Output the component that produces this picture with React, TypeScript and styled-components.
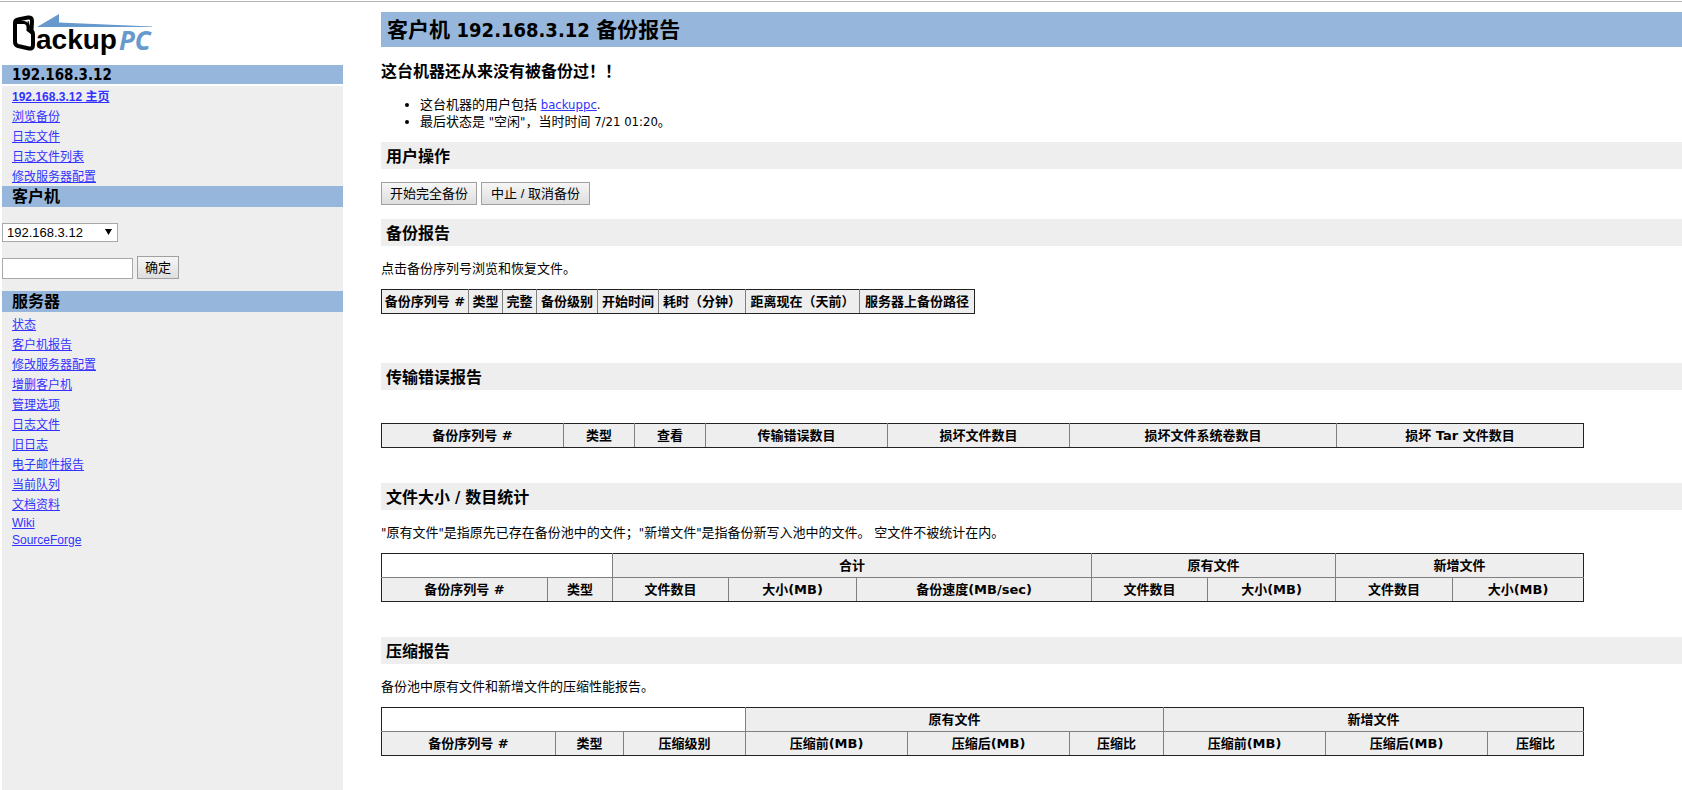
import React from "react";
import styled, { createGlobalStyle } from "styled-components";

const GlobalStyle = createGlobalStyle`
  *, *::before, *::after { box-sizing: border-box; }
  body {
    margin: 0;
    background: #fff;
    color: #000;
    font-family: "DejaVu Sans Condensed", "Noto Sans CJK SC", sans-serif;
    font-size: 13px;
    line-height: 17px;
  }
  a { color: #33f; }
`;

const Page = styled.div`
  display: flex;
  align-items: stretch;
  min-height: calc(100vh - 1px);
  margin-top: 1px;
  border-top: 1px solid #b3b3b3;
  padding-left: 2px;
`;

const Sidebar = styled.aside`
  flex: 0 0 341px;
  display: flex;
  flex-direction: column;
  font-family: "Liberation Sans", "Noto Sans CJK SC", sans-serif;
  font-size: 12px;
`;

const LogoArea = styled.div`
  height: 63px;
  padding: 11px 0 0 8px;
`;

const SideTitle = styled.h2<{ $host?: boolean }>`
  margin: 0 0 ${(p) => (p.$host ? "2px" : "0")};
  padding: 1px 0 0 10px;
  background: #96b7db;
  font-family: "DejaVu Sans Condensed", "Noto Sans CJK SC", sans-serif;
  font-size: ${(p) => (p.$host ? "15px" : "16px")};
  line-height: ${(p) => (p.$host ? "18px" : "20px")};
  font-weight: 700;
`;

const SidePanel = styled.div<{ $grow?: boolean }>`
  background: #eee;
  flex: ${(p) => (p.$grow ? "1 0 auto" : "0 0 auto")};
  padding-top: ${(p) => (p.$grow ? "3px" : "0")};
`;

const HostPanel = styled(SidePanel)`
  padding-top: 1px;
  margin-bottom: -1px;
`;

const LinkList = styled.ul`
  list-style: none;
  margin: 0;
  padding: 0 0 0 10px;
`;

const LinkRow = styled.li<{ $latin?: boolean; $strong?: boolean }>`
  line-height: ${(p) => (p.$latin ? "17px" : "20px")};
  font-weight: ${(p) => (p.$strong ? 700 : 400)};
`;

const HostForm = styled.form`
  display: flex;
  flex-direction: column;
  align-items: flex-start;
  gap: 14px;
  padding: 16px 0 12px;
`;

const FormRow = styled.div`
  display: flex;
  align-items: flex-end;
  gap: 4px;
`;

const SelectWrap = styled.div`
  position: relative;
  width: 116px;
  height: 19px;

  svg {
    position: absolute;
    right: 6px;
    top: 6px;
    pointer-events: none;
  }
`;

const HostSelect = styled.select`
  appearance: none;
  display: block;
  width: 100%;
  height: 100%;
  border: 1px solid #a9a9a9;
  border-radius: 0;
  background: #fff;
  color: #000;
  padding: 0 4px;
  font-family: "Liberation Sans", sans-serif;
  font-size: 13px;
`;

const HostInput = styled.input`
  width: 131px;
  height: 21px;
  border: 1px solid #a9a9a9;
  padding: 1px 2px;
  background: #fff;
  font-size: 13px;
`;

const Button = styled.button`
  height: 23px;
  border: 1px solid #a0a0a0;
  border-radius: 0;
  background: linear-gradient(#f6f6f6, #dedede);
  color: #000;
  padding: 0 7px;
  font-family: "Liberation Sans", "Noto Sans CJK SC", sans-serif;
  font-size: 13px;
  line-height: 21px;
`;

const ActionButton = styled(Button)<{ $wide?: boolean }>`
  padding: 0;
  width: ${(p) => (p.$wide ? "109px" : "96px")};
`;

const Content = styled.main`
  flex: 1 1 0;
  min-width: 0;
  margin-left: 38px;
  padding: 10px 0 33px;
`;

const PageTitle = styled.h1`
  margin: 0;
  padding: 2px 6px 0;
  background: #96b7db;
  font-size: 21px;
  line-height: 33px;
  font-weight: 700;
`;

const HostName = styled.span`
  font-size: 20px;
  line-height: 20px;
`;

const Notice = styled.h3`
  margin: 13px 0 12px;
  font-size: 16px;
  line-height: 24px;
`;

const Facts = styled.ul`
  margin: 0 0 12px;
  padding-left: 39px;
`;

const SectionTitle = styled.h2`
  margin: 0;
  padding: 2px 5px 0;
  background: #eee;
  font-size: 16px;
  line-height: 25px;
`;

const Actions = styled.div`
  display: flex;
  gap: 4px;
  padding: 13px 0 14px;
`;

const Lead = styled.p`
  margin: 0;
  padding: 14px 0 12px;
`;

const Section = styled.section<{ $space?: "large" | "medium" }>`
  margin-bottom: ${(p) => (p.$space === "large" ? "49px" : p.$space === "medium" ? "35px" : "0")};
`;

const Table = styled.table<{ $full?: boolean; $apart?: boolean }>`
  table-layout: fixed;
  border-collapse: collapse;
  width: ${(p) => (p.$full ? "calc(100% - 99px)" : "593px")};
  margin-top: ${(p) => (p.$apart ? "33px" : "0")};
  border: 1px solid #222;
`;

const Head = styled.th<{ $blank?: boolean }>`
  height: 24px;
  padding: 0;
  border: 1px solid #808080;
  background: ${(p) => (p.$blank ? "#fff" : "#eee")};
  font-family: "DejaVu Sans", "Noto Sans CJK SC", sans-serif;
  font-size: 13px;
  line-height: 17px;
  font-weight: 700;
  white-space: nowrap;

  tr:first-child > & { border-top-color: #222; }
  tr:last-child > & { border-bottom-color: #222; }
  &:first-child { border-left-color: #222; }
  &:last-child { border-right-color: #222; }
`;

type Group = { label: string; span: number };

function ReportTable(props: {
  columns: [string, number][];
  groups?: Group[];
  full?: boolean;
  apart?: boolean;
}) {
  return (
    <Table $full={props.full} $apart={props.apart}>
      <colgroup>
        {props.columns.map(([, w], i) => (
          <col key={i} width={w} />
        ))}
      </colgroup>
      <thead>
        {props.groups && (
          <tr>
            {props.groups.map((g, i) => (
              <Head key={i} colSpan={g.span} $blank={!g.label}>
                {g.label}
              </Head>
            ))}
          </tr>
        )}
        <tr>
          {props.columns.map(([label], i) => (
            <Head key={i} scope="col">
              {label}
            </Head>
          ))}
        </tr>
      </thead>
    </Table>
  );
}

function Logo() {
  return (
    <svg width="146" height="44" viewBox="0 0 146 44" role="img" aria-label="BackupPC">
      <path d="M27 14 L49 1 V9.5 L142 13.500 V14 Z" fill="#69c" />
      <path
        d="M5 10 Q5 7 8 6.500 L18 4.500 Q22 4 22 8 L21.500 17 Q23 19 23 22 L23 32 Q23 36 19 35.500 L8 33 Q5 32 5 29 Z"
        fill="#fff"
        stroke="#000"
        strokeWidth="4"
        strokeLinejoin="round"
      />
      <path d="M6 9.500 L14 9.500 Q18 10 18 14 V17 L22 20" fill="none" stroke="#000" strokeWidth="3" />
      <path d="M18 8 L20 16" fill="none" stroke="#000" strokeWidth="1" />
      <text x="26" y="36" fontFamily="Liberation Sans" fontWeight="700" fontSize="28" fill="#000">
        ackup
      </text>
      <text x="109" y="37" fontFamily="Noto Sans" fontWeight="700" fontStyle="italic" fontSize="26" fill="#69c">
        PC
      </text>
    </svg>
  );
}

const hostLinks = ["192.168.3.12 主页", "浏览备份", "日志文件", "日志文件列表", "修改服务器配置"];
const serverLinks = [
  "状态", "客户机报告", "修改服务器配置", "增删客户机", "管理选项", "日志文件",
  "旧日志", "电子邮件报告", "当前队列", "文档资料", "Wiki", "SourceForge",
];

export default function App() {
  return (
    <>
      <GlobalStyle />
      <Page>
        <Sidebar>
          <LogoArea>
            <Logo />
          </LogoArea>
          <SideTitle $host>192.168.3.12</SideTitle>
          <HostPanel>
            <LinkList>
              {hostLinks.map((t, i) => (
                <LinkRow key={t} $strong={i === 0}>
                  <a href="#">{t}</a>
                </LinkRow>
              ))}
            </LinkList>
          </HostPanel>
          <SideTitle>客户机</SideTitle>
          <SidePanel>
            <HostForm onSubmit={(e) => e.preventDefault()}>
              <SelectWrap>
                <HostSelect aria-label="客户机">
                  <option>192.168.3.12</option>
                </HostSelect>
                <svg width="7" height="6" viewBox="0 0 7 6" aria-hidden="true">
                  <path d="M0 0H7L3.500 6Z" fill="#000" />
                </svg>
              </SelectWrap>
              <FormRow>
                <HostInput type="text" aria-label="客户机名称" />
                <Button type="submit">确定</Button>
              </FormRow>
            </HostForm>
          </SidePanel>
          <SideTitle>服务器</SideTitle>
          <SidePanel $grow>
            <LinkList>
              {serverLinks.map((t) => (
                <LinkRow key={t} $latin={/^[A-Z]/.test(t)}>
                  <a href="#">{t}</a>
                </LinkRow>
              ))}
            </LinkList>
          </SidePanel>
        </Sidebar>
        <Content>
          <PageTitle>
            客户机 <HostName>192.168.3.12</HostName> 备份报告
          </PageTitle>
          <Notice>这台机器还从来没有被备份过！！</Notice>
          <Facts>
            <li>
              这台机器的用户包括 <a href="#">backuppc</a>.
            </li>
            <li>最后状态是 "空闲"，当时时间 7/21 01:20。</li>
          </Facts>
          <Section>
            <SectionTitle>用户操作</SectionTitle>
            <Actions>
              <ActionButton type="button">开始完全备份</ActionButton>
              <ActionButton type="button" $wide>中止 / 取消备份</ActionButton>
            </Actions>
          </Section>
          <Section $space="large">
            <SectionTitle>备份报告</SectionTitle>
            <Lead>点击备份序列号浏览和恢复文件。</Lead>
            <ReportTable
              columns={[
                ["备份序列号 #", 87], ["类型", 34], ["完整", 34], ["备份级别", 61],
                ["开始时间", 61], ["耗时（分钟）", 87], ["距离现在（天前）", 114], ["服务器上备份路径", 115],
              ]}
            />
          </Section>
          <Section $space="medium">
            <SectionTitle>传输错误报告</SectionTitle>
            <ReportTable
              full
              apart
              columns={[
                ["备份序列号 #", 182], ["类型", 71], ["查看", 71], ["传输错误数目", 182],
                ["损坏文件数目", 182], ["损坏文件系统卷数目", 267], ["损坏 Tar 文件数目", 247],
              ]}
            />
          </Section>
          <Section $space="medium">
            <SectionTitle>文件大小 / 数目统计</SectionTitle>
            <Lead>"原有文件"是指原先已存在备份池中的文件；"新增文件"是指备份新写入池中的文件。 空文件不被统计在内。</Lead>
            <ReportTable
              full
              groups={[
                { label: "", span: 2 }, { label: "合计", span: 3 },
                { label: "原有文件", span: 2 }, { label: "新增文件", span: 2 },
              ]}
              columns={[
                ["备份序列号 #", 166], ["类型", 65], ["文件数目", 116], ["大小(MB)", 128],
                ["备份速度(MB/sec)", 235], ["文件数目", 116], ["大小(MB)", 128],
                ["文件数目", 117], ["大小(MB)", 131],
              ]}
            />
          </Section>
          <Section>
            <SectionTitle>压缩报告</SectionTitle>
            <Lead>备份池中原有文件和新增文件的压缩性能报告。</Lead>
            <ReportTable
              full
              groups={[
                { label: "", span: 3 }, { label: "原有文件", span: 3 }, { label: "新增文件", span: 3 },
              ]}
              columns={[
                ["备份序列号 #", 174], ["类型", 68], ["压缩级别", 122], ["压缩前(MB)", 162],
                ["压缩后(MB)", 162], ["压缩比", 94], ["压缩前(MB)", 162], ["压缩后(MB)", 162], ["压缩比", 96],
              ]}
            />
          </Section>
        </Content>
      </Page>
    </>
  );
}
